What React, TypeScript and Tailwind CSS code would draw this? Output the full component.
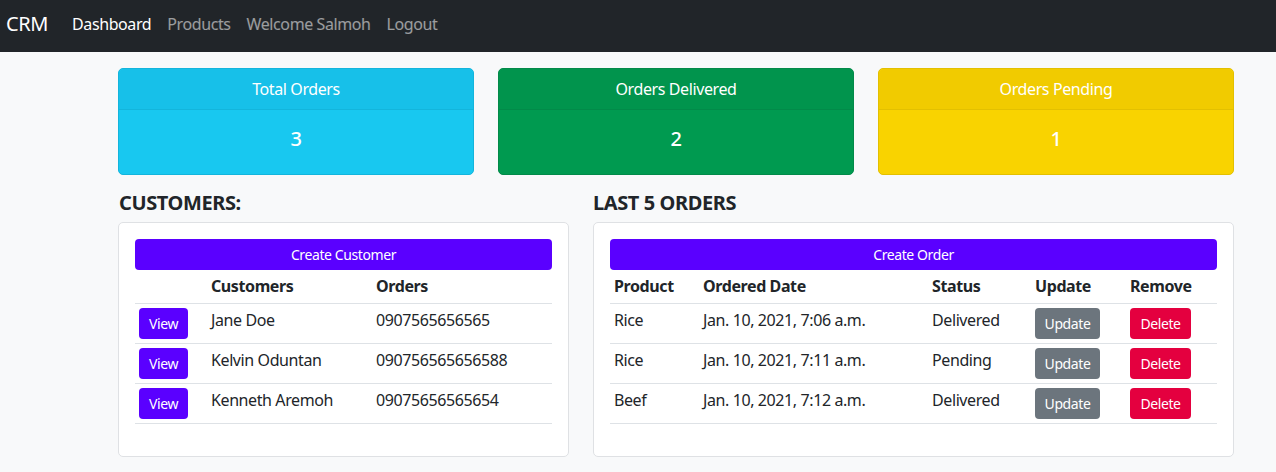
import React from "react";

const customers = [
  { name: "Jane Doe", phone: "0907565656565" },
  { name: "Kelvin Oduntan", phone: "090756565656588" },
  { name: "Kenneth Aremoh", phone: "09075656565654" },
];

const orders = [
  { product: "Rice", date: "Jan. 10, 2021, 7:06 a.m.", status: "Delivered" },
  { product: "Rice", date: "Jan. 10, 2021, 7:11 a.m.", status: "Pending" },
  { product: "Beef", date: "Jan. 10, 2021, 7:12 a.m.", status: "Delivered" },
];

function StatCard({ title, value, body, head, border }: { title: string; value: string; body: string; head: string; border: string }) {
  return (
    <div className={`flex flex-col rounded-[5px] border text-white ${body} ${border}`}>
      <div className={`h-[41px] flex items-center justify-center border-b text-[16px] rounded-t-[5px] ${head} ${border}`}>{title}</div>
      <div className="h-[64px] flex items-center justify-center text-[20px] font-medium pb-[7px]">{value}</div>
    </div>
  );
}

export default function App() {
  return (
    <div className="min-h-[472px] bg-[#f8f9fa] text-[#212529] tracking-[-0.4px]" style={{ fontFamily: '"Noto Sans", sans-serif' }}>
      <nav className="h-[52px] bg-[#212529] flex items-center pl-[6px] pb-[4px]">
        <span className="text-white text-[20px] mr-[24px]">CRM</span>
        <div className="flex items-center gap-[16px] text-[16px]">
          <span className="text-white">Dashboard</span>
          <span className="text-white/55">Products</span>
          <span className="text-white/55">Welcome Salmoh</span>
          <span className="text-white/55">Logout</span>
        </div>
      </nav>

      <div className="pl-[118px] pr-[42px] pt-[16px]">
        <div className="grid grid-cols-3 gap-[24px]">
          <StatCard title="Total Orders" value="3" body="bg-[#18c8f0]" head="bg-[#17c0e9]" border="border-[#13b5dc]" />
          <StatCard title="Orders Delivered" value="2" body="bg-[#009a50]" head="bg-[#01944d]" border="border-[#028a49]" />
          <StatCard title="Orders Pending" value="1" body="bg-[#f9d300]" head="bg-[#f1cb00]" border="border-[#e3c000]" />
        </div>

        <div className="flex gap-[24px] mt-[16px]">
          <div className="w-[451px]">
            <h5 className="text-[20px] font-bold leading-[24px] mb-[7px] pl-px">CUSTOMERS:</h5>
            <div className="bg-white border border-[#dfe1e4] rounded-[5px] p-[16px] h-[235px]">
              <div className="h-[31px] bg-[#5a00ff] text-white text-[14px] rounded-[4px] flex items-center justify-center">Create Customer</div>
              <table className="w-full border-collapse text-[16px]">
                <colgroup>
                  <col className="w-[72px]" />
                  <col className="w-[165px]" />
                  <col />
                </colgroup>
                <thead>
                  <tr className="border-b border-[#dee2e6]">
                    <th className="p-[4px] h-[33px]"></th>
                    <th className="p-[4px] text-left font-bold leading-[24px]">Customers</th>
                    <th className="p-[4px] text-left font-bold leading-[24px]">Orders</th>
                  </tr>
                </thead>
                <tbody>
                  {customers.map((c) => (
                    <tr key={c.name} className="border-b border-[#dee2e6]">
                      <td className="p-[4px] align-top">
                        <div className="h-[31px] w-[49px] bg-[#5a00ff] text-white text-[14px] rounded-[4px] flex items-center justify-center">View</div>
                      </td>
                      <td className="p-[4px] align-top leading-[24px]">{c.name}</td>
                      <td className="p-[4px] align-top leading-[24px]">{c.phone}</td>
                    </tr>
                  ))}
                </tbody>
              </table>
            </div>
          </div>

          <div className="w-[641px]">
            <h5 className="text-[20px] font-bold leading-[24px] mb-[7px]">LAST 5 ORDERS</h5>
            <div className="bg-white border border-[#dfe1e4] rounded-[5px] p-[16px] h-[235px]">
              <div className="h-[31px] bg-[#5a00ff] text-white text-[14px] rounded-[4px] flex items-center justify-center">Create Order</div>
              <table className="w-full border-collapse text-[16px]">
                <colgroup>
                  <col className="w-[89px]" />
                  <col className="w-[229px]" />
                  <col className="w-[103px]" />
                  <col className="w-[95px]" />
                  <col />
                </colgroup>
                <thead>
                  <tr className="border-b border-[#dee2e6]">
                    <th className="p-[4px] h-[33px] text-left font-bold leading-[24px]">Product</th>
                    <th className="p-[4px] text-left font-bold leading-[24px]">Ordered Date</th>
                    <th className="p-[4px] text-left font-bold leading-[24px]">Status</th>
                    <th className="p-[4px] text-left font-bold leading-[24px]">Update</th>
                    <th className="p-[4px] text-left font-bold leading-[24px]">Remove</th>
                  </tr>
                </thead>
                <tbody>
                  {orders.map((o, i) => (
                    <tr key={i} className="border-b border-[#dee2e6]">
                      <td className="p-[4px] align-top leading-[24px]">{o.product}</td>
                      <td className="p-[4px] align-top leading-[24px]">{o.date}</td>
                      <td className="p-[4px] align-top leading-[24px]">{o.status}</td>
                      <td className="p-[4px] align-top">
                        <div className="h-[31px] w-[65px] bg-[#6c757d] text-white text-[14px] rounded-[4px] flex items-center justify-center">Update</div>
                      </td>
                      <td className="p-[4px] align-top">
                        <div className="h-[31px] w-[61px] bg-[#e4003f] text-white text-[14px] rounded-[4px] flex items-center justify-center">Delete</div>
                      </td>
                    </tr>
                  ))}
                </tbody>
              </table>
            </div>
          </div>
        </div>
      </div>
    </div>
  );
}
